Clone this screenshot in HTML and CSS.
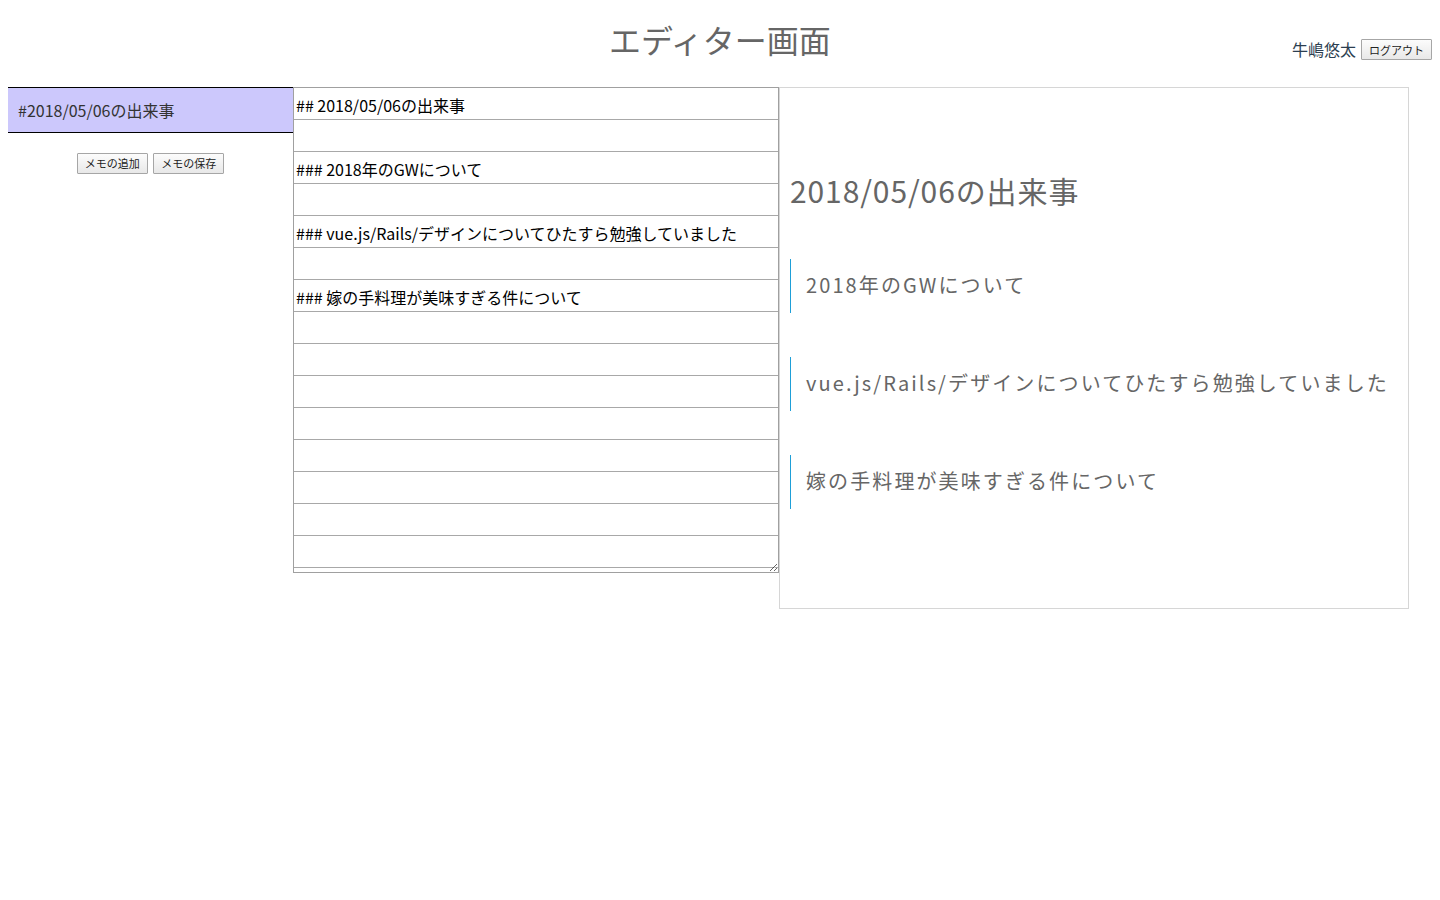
FILE: index.html
```html
<!doctype html>
<html>
<head>
    <meta charset="utf-8">
    <title>エディター画面</title>
    <link rel="stylesheet" href="styles.css">
</head>
<body>
    <div class="editor-header">
        <div></div>
        <h1 class="page-title">エディター画面</h1>
        <div class="user-box">
            <span class="user-name">牛嶋悠太</span>
            <button class="small-button">ログアウト</button>
        </div>
    </div>
    <div class="editor-main">
        <div class="memo-list">
            <div class="memo-item selected">#2018/05/06の出来事</div>
            <div class="memo-buttons">
                <button class="small-button">メモの追加</button>
                <button class="small-button">メモの保存</button>
            </div>
        </div>
        <textarea class="markdown-input">## 2018/05/06の出来事

### 2018年のGWについて

### vue.js/Rails/デザインについてひたすら勉強していました

### 嫁の手料理が美味すぎる件について</textarea>
        <div class="preview">
            <h2>2018/05/06の出来事</h2>
            <h3>2018年のGWについて</h3>
            <h3>vue.js/Rails/デザインについてひたすら勉強していました</h3>
            <h3>嫁の手料理が美味すぎる件について</h3>
        </div>
    </div>
</body>
</html>
```

FILE: styles.css
```css
body {
    margin: 8px;
    font-family: "Noto Sans CJK JP", "Noto Sans", sans-serif;
    color: #333;
    background-color: white;
}
.editor-header {
    display: grid;
    grid-template-columns: 1fr auto 1fr;
    height: 79px;
}
.page-title {
    margin: 0;
    padding-top: 6px;
    font-size: 32px;
    font-weight: normal;
    line-height: 50px;
    color: #666;
}
.user-box {
    display: flex;
    justify-content: flex-end;
    align-items: flex-start;
    padding-top: 31px;
}
.user-name {
    color: #2c3e50;
    font-size: 16px;
    line-height: 20px;
    margin-right: 5px;
}
.small-button {
    font-family: "Noto Sans CJK JP", sans-serif;
    font-size: 11px;
    height: 21px;
    padding: 0 7px;
    color: #222;
    background: linear-gradient(#fcfcfc, #e8e8e8);
    border: 1px solid #a6a6a6;
    border-radius: 1px;
}
.editor-main {
    display: flex;
    align-items: flex-start;
}
.memo-list {
    width: 285px;
    flex-shrink: 0;
}
.memo-item {
    height: 44px;
    line-height: 44px;
    padding-left: 10px;
    font-size: 16px;
    color: #333;
    border-top: 1px solid #000;
    border-bottom: 1px solid #000;
}
.memo-item.selected {
    background-color: #ccc8fc;
}
.memo-buttons {
    margin-top: 16px;
    text-align: center;
}
.memo-buttons .small-button {
    margin: 0 1px;
}
.markdown-input {
    width: 486px;
    height: 486px;
    flex-shrink: 0;
    box-sizing: border-box;
    margin: 0;
    padding: 1px 2px 0;
    font-family: "Noto Sans CJK JP", sans-serif;
    font-size: 16px;
    line-height: 32px;
    color: #000;
    border: 1px solid #a0a0a0;
    background-color: white;
    background-image: repeating-linear-gradient(to bottom, transparent 0, transparent 31px, #a8a8a8 31px, #a8a8a8 32px);
    background-attachment: local;
    outline: none;
}
.preview {
    width: 630px;
    height: 522px;
    box-sizing: border-box;
    padding: 0 10px;
    border: 1px solid #d6d6d6;
    color: #666;
}
.preview h2 {
    margin: 78px 0 45px;
    font-size: 30px;
    font-weight: normal;
    line-height: 48px;
    letter-spacing: 0.9px;
}
.preview h3 {
    margin: 0 0 44px;
    padding: 11px 15px 13px;
    font-size: 20px;
    font-weight: normal;
    line-height: 30px;
    letter-spacing: 2.1px;
    white-space: nowrap;
    border-left: 1px solid #1e9fd8;
}
```
